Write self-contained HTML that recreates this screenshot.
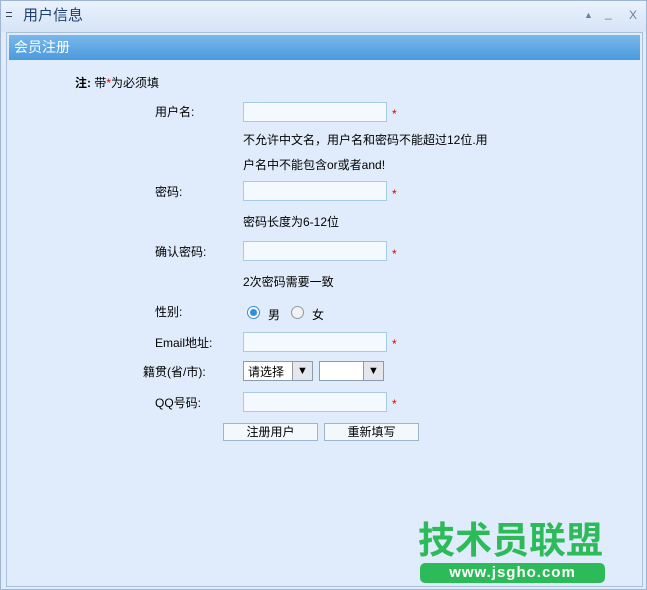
<!DOCTYPE html>
<html><head><meta charset="utf-8"><style>
*{margin:0;padding:0;box-sizing:border-box}
body{width:647px;height:590px;overflow:hidden;background:#dfeafa;font-family:"Liberation Sans","Noto Sans CJK SC",sans-serif;font-size:12px;color:#000;position:relative}
.win{position:absolute;left:0;top:0;width:647px;height:590px;border:1px solid #9fb6d3;background:#e0ecfb}
.title{position:absolute;left:0;top:0;width:645px;height:31px;background:linear-gradient(#eaf2fc,#d6e4f6)}
.title .t{position:absolute;left:22px;top:3px;font-size:15px;color:#1e3f6e}
.title .m{position:absolute;left:5px;top:11px;width:6px;height:5px;border-top:1px solid #345;border-bottom:1px solid #345}
.ctl{position:absolute;top:7px;color:#6b7f99;font-size:12px}
.body{position:absolute;left:5px;top:31px;width:637px;height:555px;border:1px solid #a8c0dc;background:#e0ecfb}
.hdr{position:absolute;left:2px;top:2px;width:631px;height:25px;background:linear-gradient(#7ab8ea,#4a9ade);color:#fff;font-size:14px;padding:2px 0 0 5px}
.a{position:absolute;white-space:nowrap}
.in{position:absolute;left:243px;width:144px;height:20px;background:#f4f9ff;border:1px solid #a6cbe3}
.st{position:absolute;left:392px;color:#d00;font-size:12px}
.btn{position:absolute;top:423px;height:18px;width:95px;border:1px solid #9cb6cf;background:#f3f8fd;text-align:center;font-size:12px;line-height:16px}
.sel{position:absolute;top:361px;height:20px;border:1px solid #8a9db0;background:#fff}
.dd{position:absolute;right:0;top:0;width:20px;height:18px;background:#e4e8ee;border-left:1px solid #999;text-align:center;font-size:11px;line-height:18px}
.rad{position:absolute;width:13px;height:13px;border-radius:50%;border:1px solid #8a9aaa;background:#f2f2f2}
</style></head><body>
<div class="win">
<div class="title"><div class="m"></div><div class="t">用户信息</div>
<div class="ctl" style="left:583px;font-size:9px;top:9px">▲</div>
<div class="ctl" style="left:604px;top:5px">_</div>
<div class="ctl" style="left:628px">X</div></div>
<div class="body"><div class="hdr">会员注册</div></div>
</div>
<div class="a" style="left:75px;top:74px"><b>注:</b> 带<span style="color:#d00">*</span>为必须填</div>
<div class="a" style="left:155px;top:103px">用户名:</div>
<div class="in" style="top:102px"></div><div class="st a" style="top:107px">*</div>
<div class="a" style="left:243px;top:131px">不允许中文名，用户名和密码不能超过12位.用</div>
<div class="a" style="left:243px;top:156px">户名中不能包含or或者and!</div>
<div class="a" style="left:155px;top:183px">密码:</div>
<div class="in" style="top:181px"></div><div class="st a" style="top:187px">*</div>
<div class="a" style="left:243px;top:213px">密码长度为6-12位</div>
<div class="a" style="left:155px;top:243px">确认密码:</div>
<div class="in" style="top:241px"></div><div class="st a" style="top:247px">*</div>
<div class="a" style="left:243px;top:273px">2次密码需要一致</div>
<div class="a" style="left:155px;top:303px">性别:</div>
<div class="rad" style="left:247px;top:306px;border-color:#3a8fd0;background:radial-gradient(#2b8ee0 3px,#fff 4px)"></div>
<div class="a" style="left:268px;top:306px">男</div>
<div class="rad" style="left:291px;top:306px"></div>
<div class="a" style="left:312px;top:306px">女</div>
<div class="a" style="left:155px;top:334px">Email地址:</div>
<div class="in" style="top:332px"></div><div class="st a" style="top:337px">*</div>
<div class="a" style="left:143px;top:363px">籍贯(省/市):</div>
<div class="sel" style="left:243px;width:70px"><span class="a" style="left:4px;top:1px">请选择</span><div class="dd">▼</div></div>
<div class="sel" style="left:319px;width:65px"><div class="dd">▼</div></div>
<div class="a" style="left:155px;top:394px">QQ号码:</div>
<div class="in" style="top:392px"></div><div class="st a" style="top:397px">*</div>
<div class="btn" style="left:223px">注册用户</div>
<div class="btn" style="left:324px">重新填写</div>
<div class="a" style="left:418px;top:522px;font-size:37px;line-height:38px;font-weight:bold;color:#2dbb5a;letter-spacing:0px">技术员联盟</div>
<div class="a" style="left:420px;top:563px;width:185px;height:20px;border-radius:5px;background:#2dbb5a;color:#fff;font-size:15px;font-weight:bold;text-align:center;line-height:20px;letter-spacing:1px">www.jsgho.com</div>
</body></html>
